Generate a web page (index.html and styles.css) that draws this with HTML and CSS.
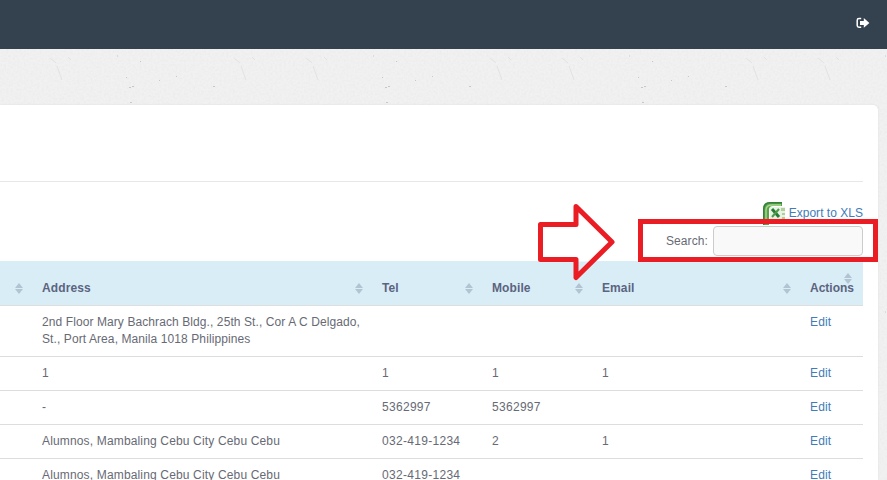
FILE: index.html
```html
<!DOCTYPE html>
<html lang="en">
<head>
<meta charset="utf-8">
<title>Records</title>
<link rel="stylesheet" href="styles.css">
</head>
<body>
<header class="topbar">
  <svg class="logout" width="14" height="12" viewBox="0 0 14 12"><path d="M5.2 1.6H3Q1.2 1.6 1.2 3.2V8.6Q1.2 10.2 3 10.2H5.2" fill="none" stroke="#fff" stroke-width="1.5"/><path d="M4 4H7.8V1L13.4 5.9L7.8 10.8V7.9H4Z" fill="#fff"/></svg>
</header>
<svg class="texture" width="887" height="431" aria-hidden="true">
  <defs>
    <filter id="grain" x="0" y="0" width="100%" height="100%"><feTurbulence type="fractalNoise" baseFrequency=".45" numOctaves="2" seed="4"/><feColorMatrix values="0 0 0 0 .45  0 0 0 0 .47  0 0 0 0 .5  .18 0 0 0 -.065"/></filter>
    <pattern id="fibres" width="256" height="256" patternUnits="userSpaceOnUse" x="0">
      <path id="fibre" d="M57 17l5 14M50 9l6 5M68 8l3 3" fill="none" stroke="#e0e2e3"/>
      <path d="M241 17l5 14M234 9l6 5M252 8l3 3" fill="none" stroke="#e0e2e3"/>
      <path d="M117 7h1M140 12.500h1M126 28.500h1M159 31.500h1M176 27.500h1M129 38.500h2M132 37.500h2M130 53.500h2M213 37.500h2" stroke="#c5c8ca"/>
    </pattern>
  </defs>
  <rect width="887" height="431" filter="url(#grain)"/>
  <rect width="887" height="431" fill="url(#fibres)"/>
</svg>
<main class="panel">
  <div class="panel-head"></div>
  <div class="export">
    <svg width="25" height="24" viewBox="0 0 25 24"><path d="M1 24V8Q1 1 8 1H20V5H11Q7 5 7 9V24Z" fill="#58a548"/><path d="M1.700 24V8Q2 1.700 8 1.700H20" fill="none" stroke="#32803a" stroke-width="1.400"/><path d="M4 23V9Q4 4 10 4H19" fill="none" stroke="#a9d493" stroke-width="1.500"/><path d="M8 6H23V19H8Z" fill="#e8f3e2"/><path d="M19 7h4v3h-4zM20 12h3v2h-3zM20 16h3v2h-3z" fill="#add09d"/><path d="M10 8L17 16" stroke="#247c37" stroke-width="3"/><path d="M17 8L10 16" stroke="#4f9a4c" stroke-width="2"/></svg>
    <a>Export to XLS</a>
  </div>
  <div class="search"><label for="q">Search:</label><input id="q" type="text"></div>
  <table>
    <colgroup><col class="c0"><col class="c1"><col class="c2"><col class="c2"><col class="c3"><col class="c4"></colgroup>
    <thead><tr><th><i class="sort"></i></th><th>Address<i class="sort"></i></th><th>Tel<i class="sort"></i></th><th>Mobile<i class="sort"></i></th><th>Email<i class="sort"></i></th><th class="actions">Actions<i class="sort high"></i></th></tr></thead>
    <tbody>
      <tr><td></td><td class="long">2nd Floor Mary Bachrach Bldg., 25th St., Cor A C Delgado,<br>St., Port Area, Manila 1018 Philippines</td><td></td><td></td><td></td><td><a>Edit</a></td></tr>
      <tr><td></td><td>1</td><td>1</td><td>1</td><td>1</td><td><a>Edit</a></td></tr>
      <tr><td></td><td>-</td><td class="num">5362997</td><td class="num">5362997</td><td></td><td><a>Edit</a></td></tr>
      <tr><td></td><td class="place">Alumnos, Mambaling Cebu City Cebu Cebu</td><td class="num">032-419-1234</td><td>2</td><td>1</td><td><a>Edit</a></td></tr>
      <tr><td></td><td class="place">Alumnos, Mambaling Cebu City Cebu Cebu</td><td class="num">032-419-1234</td><td></td><td></td><td><a>Edit</a></td></tr>
    </tbody>
  </table>
</main>
<svg class="callout" width="887" height="480"><path d="M540.500 224.500H576V206.500L612 242L576 277.500V259.500H540.500Z" fill="#fff"/><path d="M543 261.500H574V274H576L591 261.500Z" fill="#d9edf7"/><path d="M540.500 224.500H576V206.500L612 242L576 277.500V259.500H540.500Z" fill="none" stroke="#ea1c24" stroke-width="5" stroke-linejoin="round"/><rect x="640.500" y="221.500" width="235" height="38" fill="none" stroke="#ea1c24" stroke-width="5"/></svg>
</body>
</html>
```

FILE: styles.css
```css
* { box-sizing: border-box; }
body {
  margin: 0;
  height: 480px;
  overflow: hidden;
  background: #f1f1f1;
  color: #676a74;
  font: 12px/17px "Liberation Sans", Arial, sans-serif;
  letter-spacing: .2px;
}
.topbar {
  height: 49px;
  background: #34414e;
  display: flex;
  justify-content: flex-end;
  padding: 17px 17px 0 0;
}
.texture { position: absolute; top: 49px; left: 0; z-index: -1; }
.panel {
  margin: 56px 9px 0 0;
  height: 375px;
  overflow: hidden;
  padding-right: 15px;
  background: #fff;
  border-radius: 0 5px 0 0;
  box-shadow: 0 0 2px #ddd;
}
.panel-head { height: 77px; border-bottom: 1px solid #e7e7e7; }
.export {
  height: 44px;
  padding-top: 19px;
  display: flex;
  justify-content: flex-end;
  gap: 2px;
}
.export a { padding-top: 4px; letter-spacing: .02px; }
a { color: #3f7cb8; letter-spacing: .15px; }
.search {
  display: flex;
  justify-content: flex-end;
  align-items: center;
  gap: 5px;
  height: 30px;
  margin-bottom: 5px;
}
.search label { letter-spacing: .1px; }
.search input {
  width: 150px;
  height: 30px;
  border: 1px solid #ccc;
  border-radius: 4px;
  background: #f9f9f9;
}
table { width: 863px; table-layout: fixed; border-collapse: separate; border-spacing: 0; }
.c0 { width: 34px; }
.c1 { width: 340px; }
.c2 { width: 110px; }
.c3 { width: 208px; }
.c4 { width: 61px; }
th {
  position: relative;
  height: 45px;
  padding: 10px 8px 0;
  text-align: left;
  background: #d9edf7;
  border-bottom: 1px solid #dedede;
  color: #5b6480;
  white-space: nowrap;
  letter-spacing: .1px;
}
.actions { letter-spacing: 0; }
td {
  padding: 8px 0 8px 8px;
  border-bottom: 1px solid #ddd;
  vertical-align: top;
  white-space: nowrap;
}
.long { letter-spacing: .09px; }
.place { letter-spacing: .155px; }
.num { letter-spacing: .3px; }
.sort { position: absolute; right: 11px; top: 22px; width: 8px; height: 10px; }
.sort::before, .sort::after {
  content: "";
  position: absolute;
  left: 0;
  border: 4px solid transparent;
}
.sort::before { top: -4px; border-bottom: 5px solid #b2c4d2; }
.sort::after { top: 6px; border-top: 5px solid #b2c4d2; }
.high { top: 12px; }
.callout { position: absolute; top: 0; left: 0; pointer-events: none; }
```
